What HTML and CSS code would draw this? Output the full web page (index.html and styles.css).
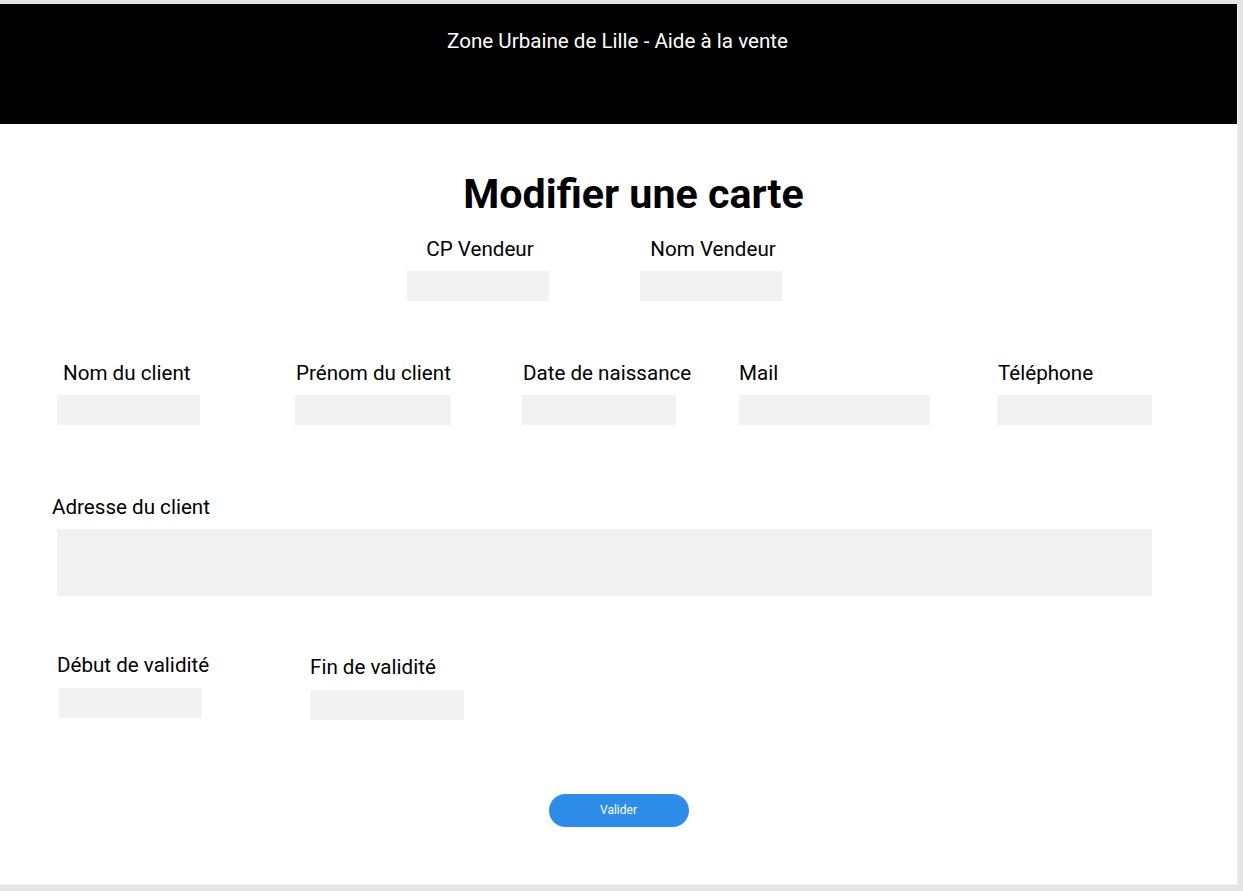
FILE: index.html
```html
<!DOCTYPE html>
<html lang="fr">
<head>
<meta charset="utf-8">
<title>Modifier une carte</title>
<link rel="stylesheet" href="styles.css">
</head>
<body>
<div class="frame">
  <header class="topbar">
    <p class="topbar-title">Zone Urbaine de Lille - Aide à la vente</p>
  </header>
  <main class="content">
    <h1 class="page-title">Modifier une carte</h1>

    <div class="row row-vendor">
      <div class="field field-center">
        <label class="label label-vendor">CP Vendeur</label>
        <div class="input w-142"></div>
      </div>
      <div class="field field-center">
        <label class="label label-vendor">Nom Vendeur</label>
        <div class="input w-142"></div>
      </div>
    </div>

    <div class="row row-client">
      <div class="field col-1">
        <label class="label label-indent">Nom du client</label>
        <div class="input w-143"></div>
      </div>
      <div class="field col-2">
        <label class="label label-nudge">Prénom du client</label>
        <div class="input w-156"></div>
      </div>
      <div class="field col-3">
        <label class="label label-nudge">Date de naissance</label>
        <div class="input w-154"></div>
      </div>
      <div class="field col-4">
        <label class="label">Mail</label>
        <div class="input w-191"></div>
      </div>
      <div class="field col-5">
        <label class="label label-nudge">Téléphone</label>
        <div class="input w-155"></div>
      </div>
    </div>

    <div class="row row-address">
      <div class="field field-wide">
        <label class="label label-out">Adresse du client</label>
        <div class="input textarea"></div>
      </div>
    </div>

    <div class="row row-validity">
      <div class="field col-v1">
        <label class="label">Début de validité</label>
        <div class="input w-143 input-shift"></div>
      </div>
      <div class="field col-v2">
        <label class="label">Fin de validité</label>
        <div class="input w-154"></div>
      </div>
    </div>

    <div class="actions">
      <button class="btn-primary" type="button">Valider</button>
    </div>
  </main>
</div>
</body>
</html>
```

FILE: styles.css
```css
* {
  box-sizing: border-box;
}

html, body {
  margin: 0;
  padding: 0;
}

body {
  background: #e5e5e5;
  font-family: Roboto, "Liberation Sans", Arial, sans-serif;
  color: #000;
  padding-top: 4px;
  height: 891px;
  overflow: hidden;
}

.frame {
  width: 1238px;
  height: 881px;
  background: #ffffff;
  border-right: 1px solid #f2f2f2;
  border-bottom: 1px solid #f2f2f2;
}

.topbar {
  height: 120px;
  background: #000;
  padding-top: 25px;
}

.topbar-title {
  margin: 0;
  text-align: center;
  color: #fff;
  font-size: 20.6px;
  line-height: 24px;
  padding-right: 2px;
}

.content {
  display: flex;
  flex-direction: column;
}

.page-title {
  margin: 45px 0 0;
  text-align: center;
  font-size: 41.2px;
  line-height: 50px;
  font-weight: 700;
  padding-left: 30px;
}

.row {
  display: flex;
}

.field {
  display: flex;
  flex-direction: column;
}

.label {
  font-size: 20.6px;
  line-height: 24px;
  display: block;
  margin-bottom: 10px;
}

.input {
  height: 30px;
  background: #f2f2f2;
}

.w-142 { width: 142px; }
.w-143 { width: 143px; }
.w-154 { width: 154px; }
.w-155 { width: 155px; }
.w-156 { width: 156px; }
.w-191 { width: 191px; }

/* vendor row */
.row-vendor {
  margin-top: 18px;
  padding-left: 407px;
  gap: 91px;
}

.field-center {
  align-items: center;
}

.label-vendor {
  padding-left: 4px;
}

/* client row */
.row-client {
  margin-top: 60px;
  padding-left: 57px;
}

.row-client .label {
  margin-bottom: 10px;
}

.col-1 { width: 238px; }
.col-2 { width: 227px; }
.col-3 { width: 217px; }
.col-4 { width: 258px; }
.col-5 { width: 155px; }

.label-indent { padding-left: 6px; }
.label-nudge { padding-left: 1px; }

/* address */
.row-address {
  margin-top: 70px;
  padding-left: 57px;
}

.field-wide {
  width: 1095px;
}

.label-out {
  margin-left: -5px;
  margin-bottom: 10px;
}

.textarea {
  height: 67px;
  width: 100%;
}

/* validity */
.row-validity {
  margin-top: 57px;
  padding-left: 57px;
}

.col-v1 { width: 253px; }
.col-v2 {
  width: 160px;
  padding-top: 2px;
}

.row-validity .label {
  margin-bottom: 11px;
}

.input-shift {
  margin-left: 2px;
}

/* actions */
.actions {
  display: flex;
  justify-content: center;
  margin-top: 74px;
}

.btn-primary {
  width: 140px;
  height: 33px;
  border: none;
  border-radius: 17px;
  background: #2d8ce8;
  color: #fff;
  font-family: Roboto, "Liberation Sans", Arial, sans-serif;
  font-size: 12px;
  padding-bottom: 3px;
}
```
